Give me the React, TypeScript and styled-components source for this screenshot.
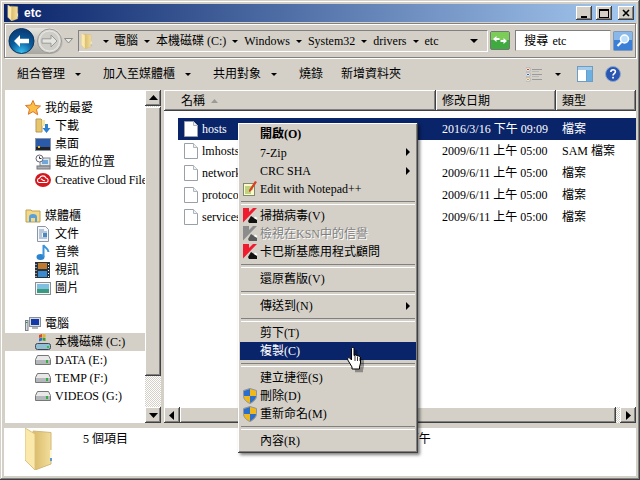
import React from "react";
import styled, { createGlobalStyle } from "styled-components";

const Global = createGlobalStyle`
  html, body { margin: 0; padding: 0; background: #d4d0c8; }
  body { font-family: "Liberation Serif", "Noto Sans CJK TC", serif; font-size: 12px; color: #000; }
  * { box-sizing: border-box; }
`;

const Win = styled.div`
  position: relative;
  width: 640px; height: 480px; overflow: hidden;
  background: #d4d0c8;
  padding: 4px 4px 5px;
  display: flex; flex-direction: column;
  box-shadow: inset -1px -1px 0 #404040, inset 1px 1px 0 #d4d0c8, inset -2px -2px 0 #808080, inset 2px 2px 0 #fff;
`;
const Title = styled.div`
  height: 18px; flex: none;
  display: flex; align-items: center; padding: 0 2px 0 3px; gap: 4px;
  background: linear-gradient(90deg, #0a246a, #a6caf0);
  color: #fff; font: bold 12px "Liberation Sans", sans-serif;
`;
const Spacer = styled.div`flex: 1;`;
const CapBtn = styled.div`
  width: 16px; height: 14px; background: #d4d0c8; margin-left: ${p => p.$gap ?? 0}px;
  box-shadow: inset -1px -1px 0 #404040, inset 1px 1px 0 #fff, inset -2px -2px 0 #808080;
  display: flex; align-items: center; justify-content: center;
`;
const AddressBar = styled.div`
  height: 35px; flex: none; margin-top: 1px;
  display: flex; align-items: center; padding: 0 2px 0 3px;
  border: 1px solid #808080; box-shadow: 1px 1px 0 #fff, inset 1px 1px 0 #fff;
`;
const AddrBox = styled.div`
  width: 412px; height: 22px; margin-left: 5px; display: flex; align-items: center;
  padding: 0 9px 0 2px;
  border-top: 1px solid #808080; border-left: 1px solid #808080;
  border-bottom: 1px solid #fff; border-right: 1px solid #fff;
`;
const Crumb = styled.span`white-space: nowrap; line-height: 14px;`;
const Tri = styled.span`
  display: block; flex: none; width: 0; height: 0;
  margin: 1px ${p => p.$m ?? 0}px 0 ${p => p.$ml ?? p.$m ?? 0}px;
  border-left: ${p => p.$s ?? 3}px solid transparent; border-right: ${p => p.$s ?? 3}px solid transparent;
  border-top: ${p => p.$s ?? 3}px solid #000;
`;
const SearchBox = styled.div`
  width: 96px; height: 21px; margin-left: 5px; background: #fff; padding-left: 8px;
  display: flex; align-items: center; gap: 4px; line-height: 14px;
  border-top: 1px solid #808080; border-left: 1px solid #808080;
  border-bottom: 1px solid #d4d0c8; border-right: 1px solid #d4d0c8;
`;
const Toolbar = styled.div`
  height: 32px; flex: none; display: flex; align-items: center; padding-left: 13px;
`;
const ToolItem = styled.span`
  display: flex; align-items: center; gap: 10px; margin-right: ${p => p.$mr}px; white-space: nowrap; line-height: 14px;
`;
const ToolIcons = styled.div`
  margin-left: auto; display: flex; align-items: center; padding-right: 15px;
`;
const Main = styled.div`
  height: 333px; flex: none; display: flex;
`;
const Nav = styled.div`
  width: 141px; flex: none; background: #fff; padding-top: 9px; overflow: hidden; border-left: 1px solid #d4d0c8;
`;
const NavGroup = styled.div`margin-bottom: 18px;`;
const NavRow = styled.div`
  height: 18px; display: flex; align-items: center; white-space: nowrap; line-height: 14px;
  padding-left: ${p => p.$top ? 19 : 29}px; gap: 4px;
  letter-spacing: ${p => p.$tight ? "-0.15px" : "0"};
  background: ${p => p.$sel ? "#d4d0c8" : "transparent"};
`;
const VScroll = styled.div`
  width: 16px; flex: none; display: flex; flex-direction: column;
  background: repeating-conic-gradient(#d4d0c8 0 25%, #fff 0 50%) 0 0 / 2px 2px;
`;
const SBtn = styled.div`
  flex: none; width: 16px; height: 16px; background: #d4d0c8;
  box-shadow: inset -1px -1px 0 #404040, inset 1px 1px 0 #fff, inset -2px -2px 0 #808080;
  display: flex; align-items: center; justify-content: center;
`;
const Thumb = styled.div`
  background: #d4d0c8; flex: none;
  height: ${p => p.$h ?? 0}px; width: ${p => p.$w ?? 16}px; margin-top: ${p => p.$mt ?? 0}px;
  box-shadow: inset -1px -1px 0 #404040, inset 1px 1px 0 #fff, inset -2px -2px 0 #808080;
`;
const Split = styled.div`width: 3px; flex: none;`;
const ListPane = styled.div`
  width: 472px; flex: none; display: flex; flex-direction: column; background: #fff;
`;
const Header = styled.div`height: 21px; flex: none; display: flex; background: #d4d0c8;`;
const HCell = styled.div`
  width: ${p => p.$w}px; flex: ${p => p.$w ? "none" : 1}; padding-left: ${p => p.$pl}px;
  display: flex; align-items: center; gap: 6px; line-height: 14px;
  box-shadow: inset -1px -1px 0 #404040, inset 1px 1px 0 #fff, inset -2px -2px 0 #808080;
`;
const Rows = styled.div`flex: 1; padding-top: 7px; overflow: hidden;`;
const Row = styled.div`
  height: 22px; margin-left: 14px; display: flex; align-items: center; line-height: 14px; white-space: nowrap;
  background: ${p => p.$sel ? "#0a246a" : "transparent"}; color: ${p => p.$sel ? "#fff" : "#000"};
`;
const NameCol = styled.div`width: 258px; flex: none; padding-left: 6px; display: flex; align-items: center; gap: 4px;`;
const DateCol = styled.div`width: 120px; flex: none; padding-left: 6px;`;
const TypeCol = styled.div`flex: 1; padding-left: 6px;`;
const HScroll = styled.div`
  height: 16px; flex: none; display: flex;
  background: repeating-conic-gradient(#d4d0c8 0 25%, #fff 0 50%) 0 0 / 2px 2px;
`;
const Details = styled.div`
  margin-top: 5px; height: 48px; flex: none; background: #fff; display: flex; padding-left: 21px; line-height: 14px;
`;
const DetailFolder = styled.div`width: 58px; flex: none;`;
const DetailText = styled.div`width: 272px; flex: none; padding-top: 4px;`;
const DetailDate = styled.div`padding-top: 4px; white-space: nowrap;`;

const Menu = styled.div`
  position: absolute; left: 238px; top: 123px; width: 180px; height: 330px;
  background: #d4d0c8; padding: 2px;
  box-shadow: inset -1px -1px 0 #404040, inset 1px 1px 0 #fff, inset -2px -2px 0 #808080, 2px 2px 3px rgba(0,0,0,.5);
`;
const MItem = styled.div`
  height: ${p => p.$h ?? 18}px; display: flex; align-items: center; position: relative; padding-left: 20px; white-space: nowrap; line-height: 14px;
  font-weight: ${p => p.$b ? 700 : 400};
  background: ${p => p.$sel ? "#0a246a" : "transparent"};
  color: ${p => p.$sel ? "#fff" : p.$dis ? "#808080" : "#000"};
  text-shadow: ${p => p.$dis ? "1px 1px 0 #fff" : "none"};
`;
const MIcon = styled.span`position: absolute; left: 3px; top: 1px; width: 16px; height: 16px; display: flex;`;
const MArrow = styled.span`
  position: absolute; right: 6px; top: 5px; width: 0; height: 0;
  border-top: 4px solid transparent; border-bottom: 4px solid transparent; border-left: 4px solid #000;
`;
const MSep = styled.div`
  height: 9px; margin: 0 1px; position: relative;
  &::after { content: ""; position: absolute; left: 0; right: 0; top: 3px; height: 2px; border-top: 1px solid #808080; border-bottom: 1px solid #fff; }
`;
const Cursor = styled.svg`position: absolute; left: 347px; top: 347px;`;

const Folder = ({ w, h, id }: { w: number; h: number; id: string }) => (
  <svg width={w} height={h} viewBox="0 0 30 42" style={{ flex: "none" }}>
    <defs>
      <linearGradient id={id} x1="0" x2="1" y1="0" y2="0"><stop offset="0" stopColor="#d8b968" /><stop offset="1" stopColor="#f3de9c" /></linearGradient>
    </defs>
    <path d="M8 3l18 1.500V36L10 42z" fill={`url(#${id})`} stroke="#d2b877" strokeWidth="1" />
    <path d="M0 0l10 6v36L0 32z" fill="#fae9ab" stroke="#ddc27e" strokeWidth="1" />
    <rect x="25" y="22" width="2" height="10" fill="#fff7d8" />
    <rect x="25" y="30" width="2" height="3" fill="#5b9bd5" />
  </svg>
);
const Star = () => (
  <svg width="16" height="16" viewBox="0 0 16 16"><path d="M8 .5l2.200 5 5.300.5-4 3.500 1.200 5.300L8 11.600l-4.700 2.700 1.200-5.300-4-3.500 5.300-.5z" fill="#fbbf45" stroke="#d9762a" /></svg>
);
const Dl = () => (
  <svg width="16" height="16" viewBox="0 0 16 16"><path d="M1 1h5l1 1v12H1z" fill="#e6c66c" stroke="#b6985a" /><path d="M7 2h3v6H7z" fill="#f5e5a5" /><path d="M10 6h3v4h2.500l-4 5-4-5H10z" fill="#2d7fd0" /></svg>
);
const Desk = () => (
  <svg width="16" height="13" viewBox="0 0 16 13"><rect x=".5" y=".5" width="15" height="12" fill="#2a5aa8" stroke="#8a96a8" /><rect x="1" y="9" width="14" height="3" fill="#222" /><rect x="3" y="8" width="2" height="2" fill="#e8c040" /></svg>
);
const Recent = () => (
  <svg width="16" height="16" viewBox="0 0 16 16"><rect x="5" y="4" width="10" height="8" fill="#dfe6ec" stroke="#7f8a94" /><rect x="7" y="6" width="6" height="4" fill="#6fa8d8" /><circle cx="4.500" cy="4.500" r="3.500" fill="#fff" stroke="#667" /><path d="M4.500 2.500v2h2" stroke="#334" fill="none" /><rect x="2" y="12" width="13" height="3" fill="#a8aeb4" stroke="#777" /></svg>
);
const CC = () => (
  <svg width="16" height="14" viewBox="0 0 16 14"><ellipse cx="8" cy="7" rx="8" ry="7" fill="#d4181f" /><path d="M4 9.500a2.200 2.200 0 0 1 .5-4.300A3.500 3.500 0 0 1 11 5a2.300 2.300 0 0 1 .5 4.500zM6 6.500c1-1.500 2 2.500 4 1" stroke="#fff" strokeWidth="1.100" fill="none" /></svg>
);
const Lib = () => (
  <svg width="16" height="14" viewBox="0 0 16 14"><path d="M1 3V1h5l1 1h8v11H1z" fill="#f2d98a" stroke="#c0a050" /><path d="M4 13V8a4 3 0 0 1 8 0v5H10V9H6v4z" fill="#5b9fd8" /></svg>
);
const Doc = () => (
  <svg width="14" height="16" viewBox="0 0 14 16"><path d="M1.500.5h8l3 3v12h-11z" fill="#f6f8fb" stroke="#8a96a8" /><path d="M3 4h5M3 6h8M3 8h3M3 10h3M3 12h8" stroke="#7a94b8" /><rect x="7" y="7" width="4" height="4" fill="#4a8ac4" /></svg>
);
const Music = () => (
  <svg width="14" height="16" viewBox="0 0 14 16"><ellipse cx="4.500" cy="13" rx="4" ry="3" fill="#2a84d0" /><path d="M7.500 13V1c1 3 5 3 5 7" stroke="#3a94dc" strokeWidth="2" fill="none" /></svg>
);
const Film = () => (
  <svg width="15" height="16" viewBox="0 0 15 16"><rect width="15" height="16" fill="#26323c" /><rect x="3" y="1" width="9" height="6" fill="#c07a30" /><rect x="3" y="9" width="9" height="6" fill="#3a8ad0" /><path d="M1 2v1M1 5v1M1 8v1M1 11v1M1 14v1M13.500 2v1M13.500 5v1M13.500 8v1M13.500 11v1M13.500 14v1" stroke="#fff" /></svg>
);
const Pic = () => (
  <svg width="16" height="13" viewBox="0 0 16 13"><rect x=".5" y=".5" width="15" height="12" fill="#f4f4f4" stroke="#8a8f96" /><rect x="2" y="2" width="12" height="5" fill="#7fc0e0" /><rect x="2" y="7" width="12" height="4" fill="#3a9a80" /></svg>
);
const Pc = () => (
  <svg width="16" height="14" viewBox="0 0 16 14"><rect x="4.500" y=".5" width="11" height="9" fill="#d8dce0" stroke="#8a8f96" /><rect x="6" y="2" width="8" height="6" fill="#1438a8" /><rect x="7" y="10" width="6" height="2" fill="#b0b4b8" /><rect x=".5" y="3.500" width="2.500" height="10" fill="#d8dce0" stroke="#7a7f86" /><rect x="1" y="5" width="1.500" height="1" fill="#2a8a40" /></svg>
);
const SysDrive = () => (
  <svg width="16" height="16" viewBox="0 0 16 16"><path d="M7.500 0l3 .500v3l-3-.500z" fill="#e8b020" /><path d="M4 1l3-1v3l-3 1z" fill="#d84a20" /><path d="M7.500 3.500l3 .500v3l-3-.500z" fill="#3a9a40" /><path d="M4 4.500l3-1v3l-3 1z" fill="#2a70c8" /><rect x=".5" y="9.500" width="15" height="6" rx="2" fill="#8fc0d4" stroke="#445" /><rect x="12" y="12" width="2" height="2" fill="#3ac040" /></svg>
);
const Drive = () => (
  <svg width="16" height="10" viewBox="0 0 16 10"><path d="M2.500.5h11l2 4v5H.5v-5z" fill="#e8e8e8" stroke="#777" /><rect x="1" y="5" width="14" height="4" fill="#b4b8ba" /><rect x="11" y="5" width="2" height="3" fill="#30b040" /></svg>
);
const FileIcon = () => (
  <svg width="14" height="16" viewBox="0 0 14 16" style={{ flex: "none" }}><path d="M.5.500h9l4 4v11H.5z" fill="#fff" stroke="#99a0a8" /><path d="M9.500.500v4h4" fill="#eef0f2" stroke="#b0b6bc" /></svg>
);
const Arrow = ({ dir }: { dir: "u" | "d" | "l" | "r" }) => {
  const d = { u: "M0 6L4.500 1 9 6z", d: "M0 2l4.500 5L9 2z", l: "M6 0L1 4.500 6 9z", r: "M2 0l5 4.500L2 9z" }[dir];
  return <svg width="9" height="9" viewBox="0 0 9 9"><path d={d} fill="#000" /></svg>;
};
const NavPair = () => (
  <svg width="55" height="28" viewBox="0 0 55 28" style={{ flex: "none" }}>
    <defs>
      <radialGradient id="bb" cx=".5" cy=".95" r=".85"><stop offset="0" stopColor="#36c0f0" /><stop offset=".55" stopColor="#0a5c9c" /><stop offset="1" stopColor="#0a3f7a" /></radialGradient>
      <linearGradient id="cap" x1="0" x2="0" y1="0" y2="1"><stop offset="0" stopColor="#e6e4de" /><stop offset="1" stopColor="#a8a6a0" /></linearGradient>
    </defs>
    <rect x="0" y="1" width="55" height="26" rx="13" fill="url(#cap)" />
    <circle cx="13.500" cy="14" r="12.500" fill="url(#bb)" stroke="#0b3560" />
    <path d="M6 14l6-6v3.800h9v4.400h-9V20z" fill="#fff" />
    <circle cx="41.500" cy="14" r="12" fill="#d8d6d0" stroke="#9a9a98" />
    <circle cx="41.500" cy="14" r="10" fill="#cfcdc7" stroke="#e8e8e4" />
    <path d="M49 14l-6-6v3.800h-9v4.400h9V20z" fill="#e4e4e0" stroke="#9a9a96" />
  </svg>
);
const Go = () => (
  <svg width="20" height="19" viewBox="0 0 20 19" style={{ marginLeft: 2, flex: "none" }}><rect x=".5" y=".5" width="19" height="18" rx="1.500" fill="#3faa3f" stroke="#707a70" /><rect x="1" y="1" width="18" height="8" fill="#7ccc5a" /><path d="M3 8l3.500-3v2h3v2h-3v2zM17 10l-3.500 3v-2h-3V9h3V7z" fill="#fff" /></svg>
);
const SearchBtn = () => (
  <svg width="20" height="20" viewBox="0 0 20 20" style={{ marginLeft: 2, flex: "none" }}><rect x=".5" y=".5" width="19" height="19" rx="1" fill="#3a7fd5" stroke="#7f9ac0" /><rect x="1" y="1" width="18" height="8" fill="#88b8ea" /><circle cx="11.500" cy="8" r="4" fill="#bfe0f8" stroke="#fff" strokeWidth="1.500" /><path d="M8.500 11l-4 4" stroke="#fff" strokeWidth="2.200" /></svg>
);
const ViewIcon = () => (
  <svg width="17" height="15" viewBox="0 0 17 15"><rect x="0" y="1" width="4" height="3" fill="#fff" stroke="#8a8a8a" strokeWidth=".5" /><rect x="1" y="2" width="2" height="1" fill="#d04020" /><rect x="0" y="6" width="4" height="3" fill="#fff" stroke="#8a8a8a" strokeWidth=".5" /><rect x="1" y="7" width="2" height="1" fill="#3060c0" /><rect x="0" y="11" width="4" height="3" fill="#fff" stroke="#8a8a8a" strokeWidth=".5" /><rect x="1" y="12" width="2" height="1" fill="#d0a020" /><path d="M6 2.500h10M6 7.500h10M6 12.500h10" stroke="#9a9a9a" /><path d="M6 4.500h7M6 9.500h7" stroke="#b8b8b8" /></svg>
);
const PaneIcon = () => (
  <svg width="16" height="16" viewBox="0 0 16 16" style={{ marginLeft: 16 }}><rect x=".5" y=".5" width="15" height="15" fill="#fff" stroke="#6c9cc8" /><rect x="1" y="1" width="14" height="3" fill="#a8cce8" /><rect x="10" y="4" width="5" height="11" fill="#6cb0e0" /><path d="M9.500 4v11" stroke="#6c9cc8" /></svg>
);
const HelpIcon = () => (
  <svg width="16" height="16" viewBox="0 0 16 16" style={{ marginLeft: 12 }}><circle cx="8" cy="8" r="7.500" fill="#2a55b0" stroke="#8fa8d0" /><path d="M5.800 6c0-3 4.600-3 4.600-.2 0 1.800-2.400 1.800-2.400 3.700" stroke="#fff" strokeWidth="1.600" fill="none" /><rect x="7.200" y="10.800" width="1.700" height="1.700" fill="#fff" /></svg>
);
const Kasp = ({ dis }: { dis?: boolean }) => (
  <svg width="15" height="15" viewBox="0 0 15 15">
    <path d="M0 0h6v4l4-4h4L0 14.500z" fill={dis ? "#8c8c8c" : "#ee1c2e"} />
    <path d="M8 8l6 4v3H6l-1-2z" fill={dis ? "#5a5a5a" : "#111"} />
    <path d="M12 8.500l2.500 1.500-1 1.500L11 10z" fill="#fff" />
  </svg>
);
const Notepad = () => (
  <svg width="14" height="15" viewBox="0 0 14 15"><rect x=".5" y="2.500" width="11" height="12" fill="#fff8c8" stroke="#7f8a70" /><path d="M2 6h8M2 8h8M2 10h6M2 12h6" stroke="#78b040" /><path d="M6 9l6-9 2 1-6 9-2 1z" fill="#d84020" /></svg>
);
const Shield = () => (
  <svg width="14" height="16" viewBox="0 0 14 16"><path d="M7 0.500l6.500 2v5c0 4-3 6.500-6.500 8-3.500-1.500-6.500-4-6.500-8v-5z" fill="#f0b818" stroke="#8a94a8" /><path d="M7 1v7H1V3zM7 8h6c0 3-3 5.500-6 7z" fill="#2a6ed0" /></svg>
);
const Hand = () => (
  <Cursor width="18" height="26" viewBox="0 0 18 26">
    <path d="M5.500 2.500c0-2 3-2 3 0v7l1-.3 2 .3 2 .7 1.500 1v6l-1 4v2H6v-2L1 14c-1-2 1-3 2-2l2.500 2z" fill="#00000055" transform="translate(2 2)" />
    <path d="M4.500 1.500c0-1.500 2.500-1.500 2.500 0v7l1.500-.5 1.500.5 2 .5 1.500 1v6l-1 4v2H5v-2L.8 13c-1-2 1-3 2-2l1.700 2z" fill="#fff" stroke="#000" />
    <path d="M8 9v5M10.500 9.500V14M13 10.500V14" stroke="#000" strokeWidth=".8" />
  </Cursor>
);

const navGroups = [
  { head: "我的最愛", icon: <Star />, items: [["下載", <Dl />], ["桌面", <Desk />], ["最近的位置", <Recent />], ["Creative Cloud Files", <CC />]] },
  { head: "媒體櫃", icon: <Lib />, items: [["文件", <Doc />], ["音樂", <Music />], ["視訊", <Film />], ["圖片", <Pic />]] },
  { head: "電腦", icon: <Pc />, items: [["本機磁碟 (C:)", <SysDrive />], ["DATA (E:)", <Drive />], ["TEMP (F:)", <Drive />], ["VIDEOS (G:)", <Drive />]] },
] as const;

const IconSlot = styled.span`width: 17px; flex: none; display: flex; justify-content: center; align-items: center;`;

const files = [
  ["hosts", "2016/3/16 下午 09:09", "檔案"],
  ["lmhosts.sam", "2009/6/11 上午 05:00", "SAM 檔案"],
  ["networks", "2009/6/11 上午 05:00", "檔案"],
  ["protocol", "2009/6/11 上午 05:00", "檔案"],
  ["services", "2009/6/11 上午 05:00", "檔案"],
];

const crumbs = ["電腦", "本機磁碟 (C:)", "Windows", "System32", "drivers", "etc"];

export default function App() {
  return (
    <>
      <Global />
      <Win>
        <Title>
          <Folder w={13} h={16} id="ft" />
          <span>etc</span>
          <Spacer />
          <CapBtn><svg width="8" height="9"><rect x="1" y="7" width="6" height="2" /></svg></CapBtn>
          <CapBtn><svg width="10" height="9"><rect x=".5" y=".5" width="9" height="8" fill="none" stroke="#000" /><rect x="0" y="0" width="10" height="2" /></svg></CapBtn>
          <CapBtn $gap={2}><svg width="8" height="8"><path d="M1 1l6 6M7 1L1 7" stroke="#000" strokeWidth="1.600" /></svg></CapBtn>
        </Title>
        <AddressBar>
          <NavPair />
          <svg width="9" height="6" style={{ marginLeft: 1, flex: "none" }}><path d="M.5.500h8L4.500 5z" fill="#e8e8e4" stroke="#8a8a8a" /></svg>
          <AddrBox>
            <Folder w={12} h={16} id="fa" />
            <Tri $ml={10} $m={5} />
            {crumbs.map((c, i) => (
              <React.Fragment key={c}>
                <Crumb>{c}</Crumb>
                {i < crumbs.length - 1 && <Tri $m={6} />}
              </React.Fragment>
            ))}
            <Spacer />
            <Tri $s={4} />
          </AddrBox>
          <Go />
          <SearchBox><span>搜尋</span><span>etc</span></SearchBox>
          <SearchBtn />
        </AddressBar>
        <Toolbar>
          <ToolItem $mr={22}>組合管理<Tri /></ToolItem>
          <ToolItem $mr={22}>加入至媒體櫃<Tri /></ToolItem>
          <ToolItem $mr={22}>共用對象<Tri /></ToolItem>
          <ToolItem $mr={18}>燒錄</ToolItem>
          <ToolItem $mr={0}>新增資料夾</ToolItem>
          <ToolIcons>
            <ViewIcon />
            <Tri $ml={12} />
            <PaneIcon />
            <HelpIcon />
          </ToolIcons>
        </Toolbar>
        <Main>
          <Nav>
            {navGroups.map(g => (
              <NavGroup key={g.head}>
                <NavRow $top><IconSlot>{g.icon}</IconSlot>{g.head}</NavRow>
                {g.items.map(([t, ic]) => (
                  <NavRow key={t as string} $sel={t === "本機磁碟 (C:)"} $tight={t === "Creative Cloud Files"}><IconSlot>{ic}</IconSlot>{t}</NavRow>
                ))}
              </NavGroup>
            ))}
          </Nav>
          <VScroll>
            <SBtn><Arrow dir="u" /></SBtn>
            <Thumb $h={269} $mt={1} />
            <Spacer />
            <SBtn><Arrow dir="d" /></SBtn>
          </VScroll>
          <Split />
          <ListPane>
            <Header>
              <HCell $w={272} $pl={17}>名稱<svg width="7" height="5"><path d="M0 5l3.500-4L7 5z" fill="#9a9a96" /></svg></HCell>
              <HCell $w={120} $pl={6}>修改日期</HCell>
              <HCell $pl={6}>類型</HCell>
            </Header>
            <Rows>
              {files.map((f, i) => (
                <Row key={f[0]} $sel={i === 0}>
                  <NameCol><FileIcon />{f[0]}</NameCol>
                  <DateCol>{f[1]}</DateCol>
                  <TypeCol>{f[2]}</TypeCol>
                </Row>
              ))}
            </Rows>
            <HScroll>
              <SBtn><Arrow dir="l" /></SBtn>
              <Thumb $h={16} $w={436} />
              <Spacer />
              <SBtn><Arrow dir="r" /></SBtn>
            </HScroll>
          </ListPane>
        </Main>
        <Details>
          <DetailFolder><Folder w={30} h={42} id="fd" /></DetailFolder>
          <DetailText>5 個項目</DetailText>
          <DetailDate>2016/3/16 下午</DetailDate>
        </Details>
        <Menu>
          <MItem $b>開啟(O)</MItem>
          <MItem $h={19}>7-Zip<MArrow /></MItem>
          <MItem>CRC SHA<MArrow /></MItem>
          <MItem><MIcon><Notepad /></MIcon>Edit with Notepad++</MItem>
          <MSep />
          <MItem><MIcon><Kasp /></MIcon>掃描病毒(V)</MItem>
          <MItem $dis><MIcon><Kasp dis /></MIcon>檢視在KSN中的信譽</MItem>
          <MItem><MIcon><Kasp /></MIcon>卡巴斯基應用程式顧問</MItem>
          <MSep />
          <MItem>還原舊版(V)</MItem>
          <MSep />
          <MItem>傳送到(N)<MArrow /></MItem>
          <MSep />
          <MItem>剪下(T)</MItem>
          <MItem $sel>複製(C)</MItem>
          <MSep />
          <MItem>建立捷徑(S)</MItem>
          <MItem><MIcon><Shield /></MIcon>刪除(D)</MItem>
          <MItem><MIcon><Shield /></MIcon>重新命名(M)</MItem>
          <MSep />
          <MItem>內容(R)</MItem>
        </Menu>
        <Hand />
      </Win>
    </>
  );
}
